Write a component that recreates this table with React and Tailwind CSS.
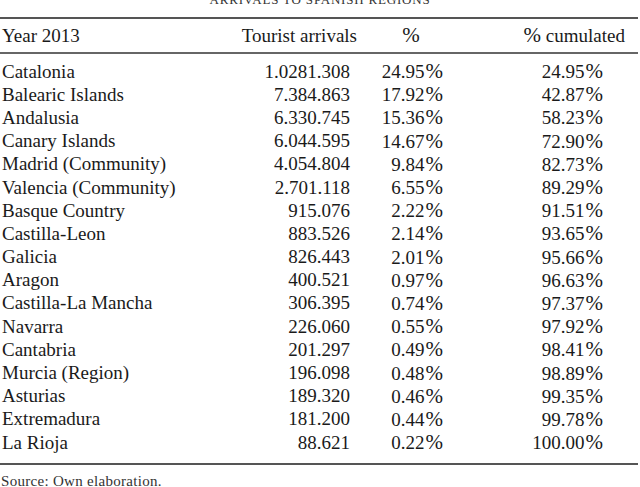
const rows = [
  ['Catalonia', '1.0281.308', '24.95', '24.95'],
  ['Balearic Islands', '7.384.863', '17.92', '42.87'],
  ['Andalusia', '6.330.745', '15.36', '58.23'],
  ['Canary Islands', '6.044.595', '14.67', '72.90'],
  ['Madrid (Community)', '4.054.804', '9.84', '82.73'],
  ['Valencia (Community)', '2.701.118', '6.55', '89.29'],
  ['Basque Country', '915.076', '2.22', '91.51'],
  ['Castilla-Leon', '883.526', '2.14', '93.65'],
  ['Galicia', '826.443', '2.01', '95.66'],
  ['Aragon', '400.521', '0.97', '96.63'],
  ['Castilla-La Mancha', '306.395', '0.74', '97.37'],
  ['Navarra', '226.060', '0.55', '97.92'],
  ['Cantabria', '201.297', '0.49', '98.41'],
  ['Murcia (Region)', '196.098', '0.48', '98.89'],
  ['Asturias', '189.320', '0.46', '99.35'],
  ['Extremadura', '181.200', '0.44', '99.78'],
  ['La Rioja', '88.621', '0.22', '100.00'],
];

function Pct({ v }) {
  return (
    <>
      {v}
      <span className="ml-[1px] text-[21px]">%</span>
    </>
  );
}

export default function App() {
  return (
    <div className="w-[640px] h-[487px] overflow-hidden bg-white text-[#1a1a1a] font-['Liberation_Serif',serif]">
      {/* caption, cut off at the top */}
      <div className="h-[17px] overflow-hidden">
        <div className="mt-[-7px] text-center text-[13px] leading-[14px] tracking-[0.8px] text-[#333]">
          ARRIVALS TO SPANISH REGIONS
        </div>
      </div>

      <div className="w-[638px]">
        <div className="h-[2px] bg-[#555]" />
        <div className="grid grid-cols-[230px_140px_100px_168px] h-[33px] items-center text-[19px] leading-[22px]">
          <div className="pl-[2px]">Year 2013</div>
          <div className="text-right pr-[13px]">Tourist arrivals</div>
          <div className="text-center pr-[18px]"><span className="text-[21px]">%</span></div>
          <div className="text-right pr-[13px]"><span className="text-[21px]">%</span> cumulated</div>
        </div>
        <div className="h-[2px] bg-[#666]" />

        <div className="pt-[6px] pb-[9px]">
          {rows.map((r) => (
            <div key={r[0]} className="grid grid-cols-[230px_140px_100px_168px] h-[23.2px] items-center text-[19px] leading-[22px]">
              <div className="pl-[2px]">{r[0]}</div>
              <div className="text-right pr-[20px]">{r[1]}</div>
              <div className="text-right pr-[27px]"><Pct v={r[2]} /></div>
              <div className="text-right pr-[35px]"><Pct v={r[3]} /></div>
            </div>
          ))}
        </div>
        <div className="h-[2px] bg-[#555]" />
      </div>

      <div className="pl-[1px] pt-[8px] text-[15px] leading-[16px] tracking-[0.3px] text-[#333]">Source: Own elaboration.</div>
    </div>
  );
}
